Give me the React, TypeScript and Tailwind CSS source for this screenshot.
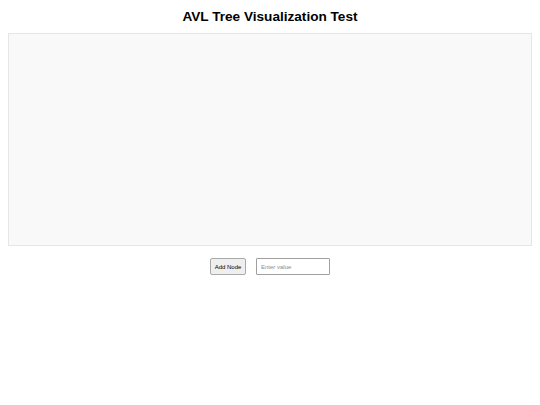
export default function App() {
  return (
    <div className="min-h-[405px] bg-white px-2 font-['Liberation_Sans',Arial,sans-serif] text-black">
      <h1 className="pt-[8px] pb-[7px] text-center text-[13.6px] leading-[18px] font-bold">
        AVL Tree Visualization Test
      </h1>
      <div className="h-[213px] w-full border border-[#e6e6e6] bg-[#f9f9f9]" />
      <div className="mt-[12px] flex items-center justify-center gap-[10px]">
        <button className="h-[17px] w-[36px] rounded-[2px] border border-[#a9a9a9] bg-[#efefef] text-[6px] leading-none text-black">
          Add Node
        </button>
        <input
          placeholder="Enter value"
          className="h-[17px] w-[74px] rounded-[1px] border border-[#a0a0a0] bg-white px-[4px] text-[6px] placeholder:text-[#8a8a8a] outline-none"
        />
      </div>
    </div>
  )
}
